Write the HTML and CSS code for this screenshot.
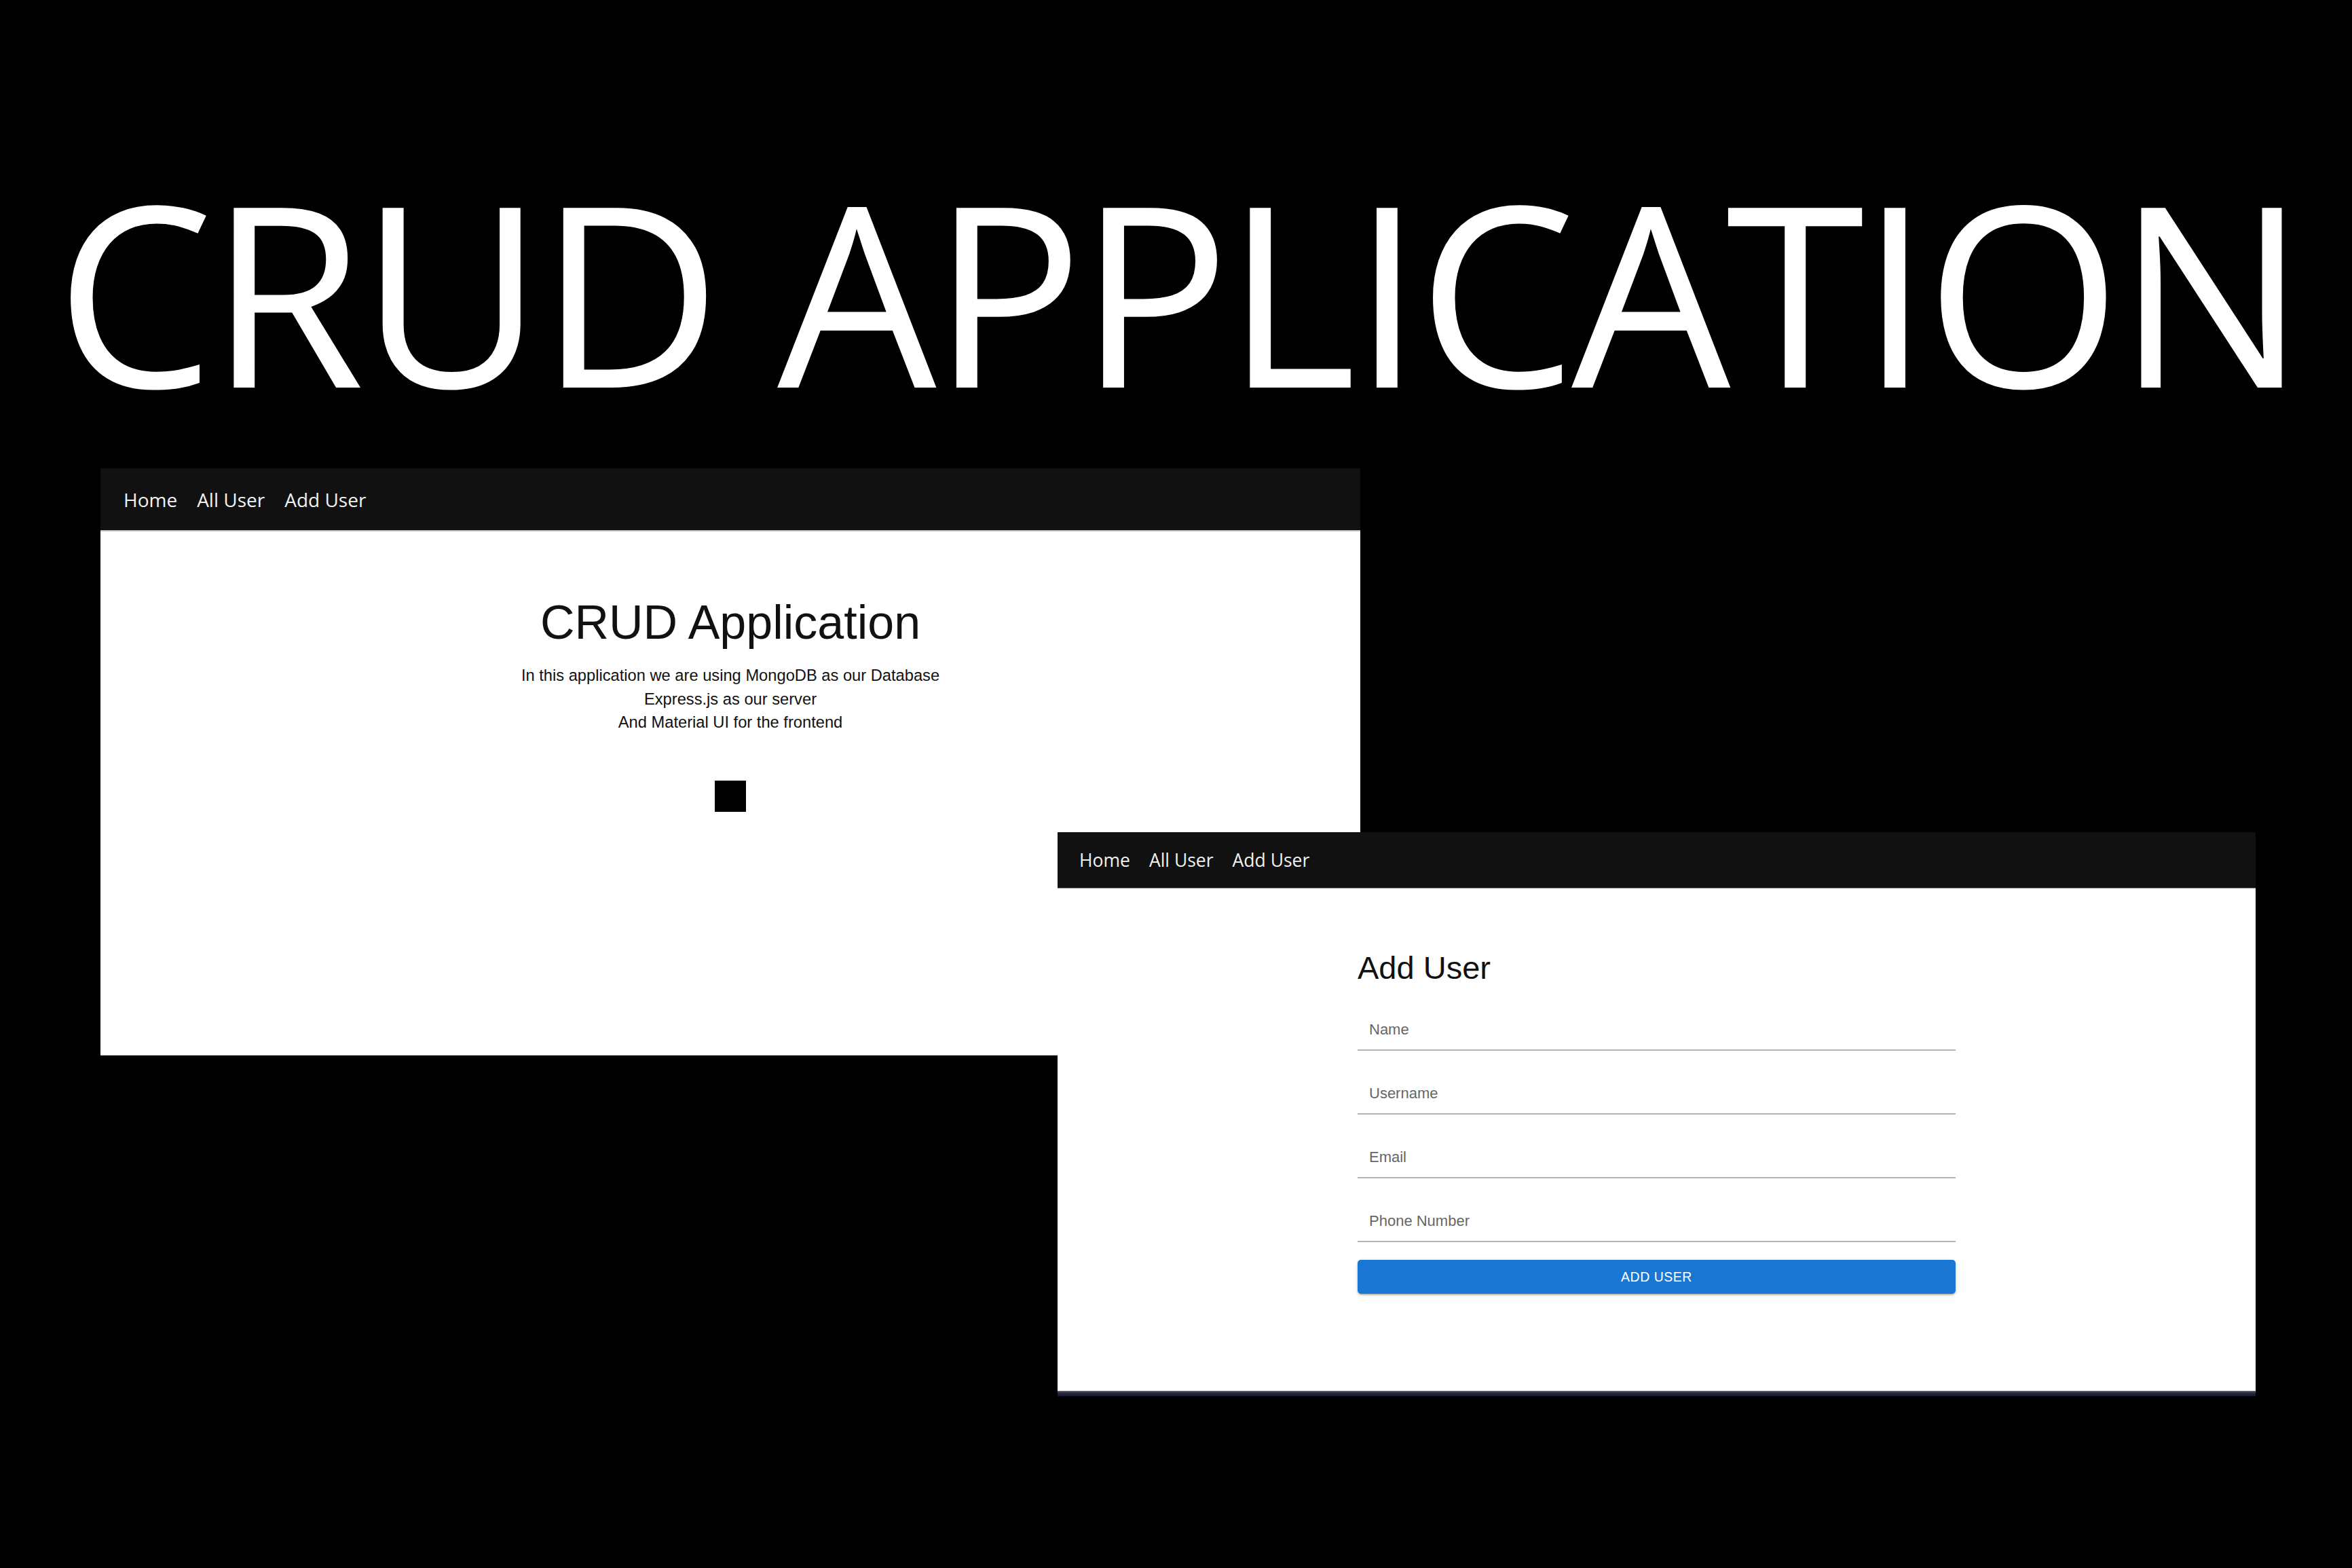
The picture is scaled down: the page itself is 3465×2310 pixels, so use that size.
FILE: index.html
```html
<!DOCTYPE html>
<html lang="en">
<head>
<meta charset="utf-8">
<title>CRUD Application</title>
<link rel="stylesheet" href="styles.css">
</head>
<body>
<div class="desk">
  <h1 class="title">CRUD APPLICATION</h1>

  <section class="window window-home">
    <nav class="nav nav-lg">
      <a class="nav-link">Home</a>
      <a class="nav-link">All User</a>
      <a class="nav-link">Add User</a>
    </nav>
    <main class="home-body">
      <h2 class="home-heading">CRUD Application</h2>
      <p class="home-text">In this application we are using MongoDB as our Database<br>Express.js as our server<br>And Material UI for the frontend</p>
      <div class="home-square"></div>
    </main>
  </section>

  <section class="window window-add">
    <nav class="nav nav-sm">
      <a class="nav-link">Home</a>
      <a class="nav-link">All User</a>
      <a class="nav-link">Add User</a>
    </nav>
    <main class="add-body">
      <form class="add-form">
        <h2 class="add-heading">Add User</h2>
        <div class="field"><span class="field-label">Name</span></div>
        <div class="field"><span class="field-label">Username</span></div>
        <div class="field"><span class="field-label">Email</span></div>
        <div class="field"><span class="field-label">Phone Number</span></div>
        <button type="button" class="add-button">ADD USER</button>
      </form>
    </main>
    <div class="window-edge"></div>
  </section>
</div>
</body>
</html>
```

FILE: styles.css
```css
html, body {
  margin: 0;
  padding: 0;
  background: #000;
}

.desk {
  position: relative;
  width: 3465px;
  height: 2310px;
  overflow: hidden;
  background: #000;
}

.title {
  margin: 0;
  padding-top: 242px;
  padding-left: 7px;
  font-family: "Open Sans", "Noto Sans", sans-serif;
  font-weight: 400;
  font-size: 371px;
  line-height: 1;
  letter-spacing: -7px;
  color: #fff;
  text-align: center;
  white-space: nowrap;
}

.window {
  position: absolute;
  background: #fff;
  display: flex;
  flex-direction: column;
}

.window-home {
  left: 148px;
  top: 690px;
  width: 1856px;
  height: 864px;
  border-bottom: 1px solid #c8c8c8;
}

.window-add {
  left: 1558px;
  top: 1226px;
  width: 1765px;
  height: 831px;
}

.nav {
  display: flex;
  align-items: center;
  background: #111;
  font-family: "Open Sans", "Noto Sans", sans-serif;
  color: #f2f2f2;
}

.nav-lg {
  height: 91px;
  padding-left: 34px;
  gap: 29px;
  font-size: 28px;
  border-bottom: 2px solid #c4c4c4;
}

.nav-sm {
  height: 82px;
  padding-left: 32px;
  gap: 28px;
  font-size: 26.5px;
  border-bottom: 1px solid #9a9a9a;
}

.nav-link {
  text-decoration: none;
  color: inherit;
}

.home-body {
  flex: 1;
  display: flex;
  flex-direction: column;
  align-items: center;
  padding-top: 92px;
  font-family: "Liberation Sans", Arial, sans-serif;
  color: #111;
}

.home-heading {
  margin: 0;
  font-weight: 400;
  font-size: 70px;
  line-height: 84px;
}

.home-text {
  margin: 19px 0 0;
  font-size: 23.7px;
  line-height: 34.5px;
  text-align: center;
}

.home-square {
  margin-top: 68px;
  width: 46px;
  height: 46px;
  background: #000;
}

.add-body {
  flex: 1;
  display: flex;
  justify-content: center;
  font-family: "Liberation Sans", Arial, sans-serif;
}

.add-form {
  width: 881px;
  display: flex;
  flex-direction: column;
  padding-top: 89px;
}

.add-heading {
  margin: 0 0 0;
  font-weight: 400;
  font-size: 47px;
  line-height: 56px;
  color: #111;
}

.field {
  padding: 50px 0 16px 17px;
  border-bottom: 2px solid #b3b3b3;
}

.field-label {
  display: block;
  font-size: 22px;
  line-height: 26px;
  color: #666;
}

.add-button {
  margin-top: 26px;
  height: 50px;
  border: 0;
  border-radius: 5px;
  background: #1976d2;
  color: #fff;
  font-family: "Liberation Sans", Arial, sans-serif;
  font-size: 19.5px;
  letter-spacing: 0.5px;
  box-shadow: 0 3px 2px -2px rgba(0,0,0,0.2), 0 2px 3px 0 rgba(0,0,0,0.14), 0 1px 6px 0 rgba(0,0,0,0.12);
}

.window-edge {
  height: 8px;
  background: linear-gradient(#6a6d78, #2a2e44 35%, #13162a);
}
```
